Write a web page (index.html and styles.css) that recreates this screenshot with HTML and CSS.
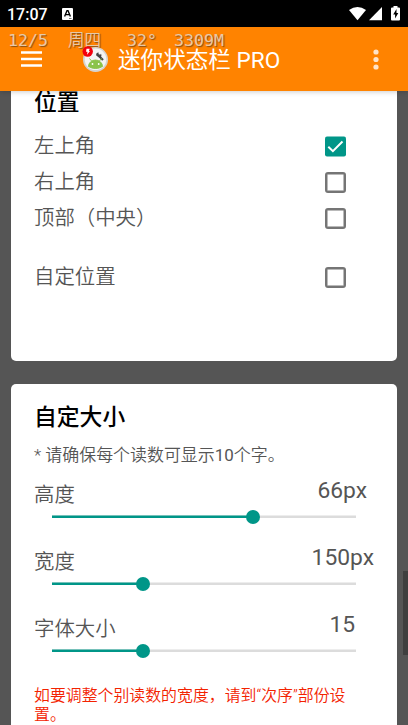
FILE: index.html
```html
<!DOCTYPE html>
<html lang="zh-CN">
<head>
<meta charset="utf-8">
<title>迷你状态栏 PRO</title>
<link rel="stylesheet" href="styles.css">
</head>
<body>
<div class="screen">
  <div class="status">
    <span class="clock">17:07</span>
    <svg class="notice" width="11" height="12" viewBox="0 0 11 12"><rect width="11" height="12" rx="1" fill="#fff"/><path d="M2.6 8.6 5 2.6h1l2.4 6M3.7 6.6h3.6" fill="none" stroke="#000" stroke-width="1.4"/><path d="M7 10.5h2.5" stroke="#777"/></svg>
    <svg class="signals" width="52" height="16" viewBox="0 0 52 16"><path d="M0 4Q8.5-2 17 4L8.5 14.3Z" fill="#fff"/><path d="M20 14.2 33 1v13.2Z" fill="#fff"/><path d="M44.500 0h4v1.500h1.500q1 0 1 1v11q0 1-1 1h-7q-1 0-1-1v-11q0-1 1-1h1.500Z" fill="#fff"/><path d="M47.500 3 44.200 8.600h1.900V12.500l3.200-5.600h-1.800Z" fill="#000"/></svg>
  </div>
  <header class="bar">
    <svg class="menu" width="21" height="16" viewBox="0 0 21 16"><path d="M0 1.500h21M0 8h21M0 14.500h21" stroke="#fff" stroke-width="2.600"/></svg>
    <svg class="logo" width="28" height="27" viewBox="0 0 28 27">
      <circle cx="14.500" cy="13.500" r="12.500" fill="#d5d3d0"/><circle cx="14.500" cy="13.300" r="10.800" fill="#f4f4f4"/>
      <path d="m17 9 5 5" stroke="#444" stroke-width="2.200"/><path d="M15.200 9.600q-.5-3 2.500-3.100l-.2 1.800 1.700.5.8-1.100q1.500 3-1.800 3.800Z" fill="#444"/>
      <path d="M7.500 20.500a7 6.500 0 0 1 14 0q-7 4-14 0ZM8.500 12.500l2.500 3M20.500 12.500l-2.500 3" fill="#8bc34a" stroke="#8bc34a"/><circle cx="11.500" cy="18" r=".9" fill="#fff"/><circle cx="17.700" cy="18" r=".9" fill="#fff"/>
      <circle cx="6.700" cy="5.500" r="5.200" fill="#f3000d"/><path d="M5.500 2.800h3.200L7.900 5H9L6 8.700l.5-2.900H5Z" fill="#fff"/>
    </svg>
    <h1>迷你状态栏 PRO</h1>
    <svg class="more" width="6" height="21" viewBox="0 0 6 21"><g fill="#ffe4c8"><circle cx="3" cy="3" r="2.600"/><circle cx="3" cy="10.500" r="2.600"/><circle cx="3" cy="18" r="2.600"/></g></svg>
    <div class="overlay"><span class="date">12/5</span><span class="day">周四</span><span class="temp">32°</span><span>3309M</span></div>
  </header>
  <main>
    <section class="card place">
      <h2>位置</h2>
      <div class="option"><span>左上角</span><svg class="box" width="21" height="20" viewBox="0 0 21 20"><rect width="21" height="20" rx="2" fill="#009688"/><path d="m3.300 10.200 4.600 4.500L17.500 5" fill="none" stroke="#fff" stroke-width="2"/></svg></div>
      <div class="option"><span>右上角</span><i class="box empty"></i></div>
      <div class="option"><span>顶部（中央）</span><i class="box empty"></i></div>
      <div class="option custom"><span>自定位置</span><i class="box empty"></i></div>
    </section>
    <section class="card size">
      <h2>自定大小</h2>
      <p class="note">* 请确保每个读数可显示<span class="digits">10</span>个字。</p>
      <div class="setting"><div class="row"><span>高度</span><span class="value">66px</span></div><div class="track"><div class="fill" style="width:201px"></div><i class="knob"></i></div></div>
      <div class="setting"><div class="row"><span>宽度</span><span class="value wide">150px</span></div><div class="track"><div class="fill" style="width:91px"></div><i class="knob"></i></div></div>
      <div class="setting"><div class="row"><span>字体大小</span><span class="value short">15</span></div><div class="track"><div class="fill" style="width:91px"></div><i class="knob"></i></div></div>
      <p class="warning">如要调整个别读数的宽度，请到“次序”部份设置。</p>
    </section>
  </main>
  <div class="scroll"></div>
</div>
</body>
</html>
```
FILE: styles.css
```css
* { box-sizing: border-box; }
body { margin: 0; font-family: Roboto, "Noto Sans CJK SC", sans-serif; color: #555; }
h1, h2, p { margin: 0; }
svg { display: block; flex: none; }
.screen { position: relative; width: 408px; height: 725px; overflow: hidden; background: #555; display: flex; flex-direction: column; }
.status { height: 27px; flex: none; background: #000; color: #fff; display: flex; align-items: center; padding-left: 7px; }
.clock { width: 55px; font-size: 16px; font-weight: 500; line-height: 27px; padding-top: 1px; }
.signals { margin: 0 7px 0 auto; }
.bar { position: relative; z-index: 1; height: 64px; flex: none; background: #ff8300; display: flex; align-items: center; padding: 0 29px 0 21px; box-shadow: 0 1px 5px rgba(0,0,0,.2); }
.logo { margin-left: 39px; position: relative; z-index: 2; }
.bar h1 { margin-left: 9px; font-size: 22.6px; line-height: 32px; font-weight: 400; color: #fff; white-space: nowrap; padding-top: 3px; }
.more { margin-left: auto; }
.overlay { position: absolute; left: 8px; top: 4px; display: flex; font: 16.6px/20px "DejaVu Sans Mono", "Noto Sans CJK SC", monospace; color: #e5d6c4; opacity: .85; text-shadow: 1px 1px 1px #754519; white-space: pre; }
.date { width: 60px; }
.day { width: 59px; font-weight: 350; }
.temp { width: 47px; }
main { flex: 1; min-height: 0; padding: 0 11px; }
.card { background: #fff; padding: 0 24px 0 23px; }
.place { display: flow-root; height: 270px; border-radius: 0 0 5px 5px; }
h2 { font-size: 22.8px; line-height: 30px; font-weight: 500; color: #000; }
.place h2 { margin-top: -3px; height: 39px; }
.option { display: flex; align-items: center; justify-content: space-between; height: 36.3px; padding: 2px 27px 0 0; font-size: 20.4px; line-height: 30px; font-weight: 350; }
.option span { margin-top: -1px; }
.option.custom { margin-top: 22.500px; }
.box { width: 21px; height: 21px; }
.empty { border: 2px solid #757575; border-radius: 3px; box-shadow: inset 0 0 0 .5px #757575; }
.size { height: 400px; margin-top: 23px; padding-top: 19px; border-radius: 5px 5px 0 0; }
.note { margin-top: 10px; font-size: 16.95px; line-height: 25px; font-weight: 350; }
.digits { font-weight: 400; }
.setting { height: 67px; padding-top: 8px; }
.row { display: flex; justify-content: space-between; height: 39px; font-size: 20.4px; line-height: 38px; font-weight: 350; }
.value { font-size: 22.8px; line-height: 29px; margin-right: 6px; font-weight: 400; }
.value.wide { margin-right: -1px; }
.value.short { margin-right: 18px; }
.track { width: 304px; height: 2px; margin: 1px 0 0 18px; background: #dcdcdc; display: flex; align-items: center; box-shadow: 0 -.5px #dcdcdc; }
.fill { height: 2px; background: #009688; box-shadow: 0 -.5px #009688; }
.knob { width: 14px; height: 14px; margin-left: -7px; border-radius: 50%; background: #009688; flex: none; }
.warning { width: 321px; margin-top: 18px; font-size: 15.9px; line-height: 18.500px; color: #f32200; font-weight: 350; }
.scroll { position: absolute; right: 0; top: 571px; width: 5px; height: 84px; background: #3f3f3f; }
```
